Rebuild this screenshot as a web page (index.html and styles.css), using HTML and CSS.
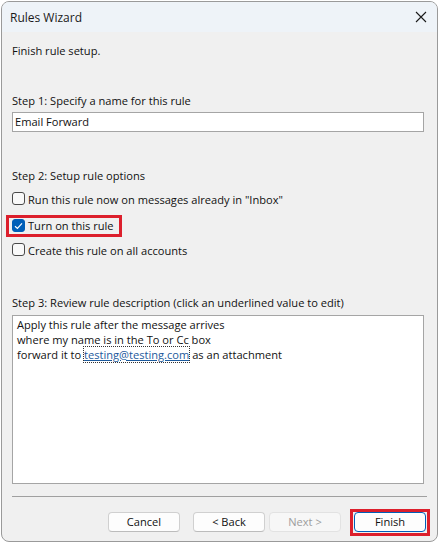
FILE: index.html
```html
<!DOCTYPE html>
<html>
<head>
<meta charset="utf-8">
<link rel="stylesheet" href="styles.css">
</head>
<body>
<div class="window">
  <div class="titlebar">
    <span class="title">Rules Wizard</span>
    <svg class="close" width="12" height="12" viewBox="0 0 12 12"><path d="M1 1 L11 11 M11 1 L1 11" stroke="#1a1a1a" stroke-width="1.1" fill="none"/></svg>
  </div>
  <div class="content">
    <div class="intro">Finish rule setup.</div>
    <div class="label step1">Step 1: Specify a name for this rule</div>
    <div class="textbox">Email Forward</div>
    <div class="label step2">Step 2: Setup rule options</div>
    <div class="options">
      <label class="option"><span class="cb"></span><span>Run this rule now on messages already in "Inbox"</span></label>
      <label class="option"><span class="hl"><span class="cb checked"><svg width="9" height="8" viewBox="0 0 9 8"><path d="M1 4.2 L3.4 6.4 L8 1.4" stroke="#fff" stroke-width="1.2" fill="none"/></svg></span><span>Turn on this rule</span></span></label>
      <label class="option"><span class="cb"></span><span>Create this rule on all accounts</span></label>
    </div>
    <div class="label step3">Step 3: Review rule description (click an underlined value to edit)</div>
    <div class="desc">
      <div>Apply this rule after the message arrives</div>
      <div>where my name is in the To or Cc box</div>
      <div>forward it to <span class="link">testing@testing.com</span> as an attachment</div>
    </div>
    <div class="sep"></div>
    <div class="buttons">
      <span class="btn">Cancel</span>
      <span class="btn back">&lt; Back</span>
      <span class="btn disabled">Next &gt;</span>
      <span class="btn primary">Finish</span>
    </div>
  </div>
</div>
</body>
</html>
```

FILE: styles.css
```css
html, body {
  margin: 0;
  padding: 0;
  background: #ffffff;
}
body {
  font-family: "Open Sans", "Noto Sans", sans-serif;
  font-size: 11.1px;
  color: #111;
}
.window {
  box-sizing: border-box;
  width: 437px;
  height: 541px;
  margin: 1px 0 0 1px;
  border: 1px solid #9a9a9a;
  border-radius: 8px;
  overflow: hidden;
  background: #f0f0f0;
  display: flex;
  flex-direction: column;
}
.titlebar {
  height: 30px;
  flex: none;
  background: #eef3f8;
  display: flex;
  align-items: center;
  justify-content: space-between;
  padding: 0 10px 0 8px;
}
.title {
  font-size: 12px;
  color: #1a1a1a;
}
.close {
  display: block;
}
.content {
  flex: 1;
  padding: 0 13px 0 10px;
  display: flex;
  flex-direction: column;
}
.intro {
  margin-top: 11px;
  line-height: 16px;
}
.label {
  line-height: 16px;
}
.step1 {
  margin-top: 34px;
}
.textbox {
  box-sizing: border-box;
  margin-top: 3px;
  height: 20px;
  background: #fff;
  border: 1px solid #a5a5a5;
  padding: 0 2px;
  line-height: 18px;
}
.step2 {
  margin-top: 36px;
}
.options {
  display: flex;
  flex-direction: column;
  margin-top: 8px;
}
.option {
  display: flex;
  height: 25.5px;
  align-items: flex-start;
}
.option > span,
.hl {
  display: flex;
  align-items: center;
  gap: 3px;
  line-height: 16px;
}
.hl {
  position: relative;
  padding-right: 2px;
}
.hl::before {
  content: "";
  position: absolute;
  left: -6px;
  right: -6px;
  top: -3px;
  bottom: -3px;
  border: 3px solid #dc1f2c;
}
.option > .cb {
  margin-right: 3px;
}
.cb {
  box-sizing: border-box;
  width: 13px;
  height: 13px;
  border: 1px solid #4a4a4a;
  border-radius: 3px;
  background: #f9f9f9;
  display: flex;
  align-items: center;
  justify-content: center;
}
.cb.checked {
  border-color: #005fb8;
  background: #005fb8;
}
.step3 {
  margin-top: 26px;
}
.desc {
  box-sizing: border-box;
  margin-top: 4px;
  height: 169px;
  background: #fff;
  border: 1px solid #a5a5a5;
  padding: 1px 4px;
  line-height: 15px;
}
.link {
  color: #1c5a9c;
  text-decoration: underline;
  outline: 1px dotted #333;
  outline-offset: 0;
}
.sep {
  margin-top: 12px;
  margin-right: -3px;
  height: 1px;
  background: #a0a0a0;
}
.buttons {
  margin-top: 15px;
  display: flex;
  justify-content: flex-end;
  margin-right: -2px;
}
.btn {
  box-sizing: border-box;
  width: 72px;
  height: 20px;
  border: 1px solid #d0d0d0;
  border-bottom-color: #bcbcbc;
  border-radius: 4px;
  background: #fdfdfd;
  display: flex;
  align-items: center;
  justify-content: center;
  line-height: 16px;
}
.back {
  margin-left: 13px;
}
.disabled {
  margin-left: 4px;
  color: #9d9d9d;
  border-color: #e2e2e2;
  background: #f7f7f7;
}
.primary {
  position: relative;
  margin-left: 13px;
  border: 1px solid #005fb8;
  box-shadow: inset 0 0 0 1px #fff;
}
.primary::before {
  content: "";
  position: absolute;
  left: -5px;
  right: -5px;
  top: -4px;
  bottom: -5px;
  border: 3px solid #dc1f2c;
}
```
